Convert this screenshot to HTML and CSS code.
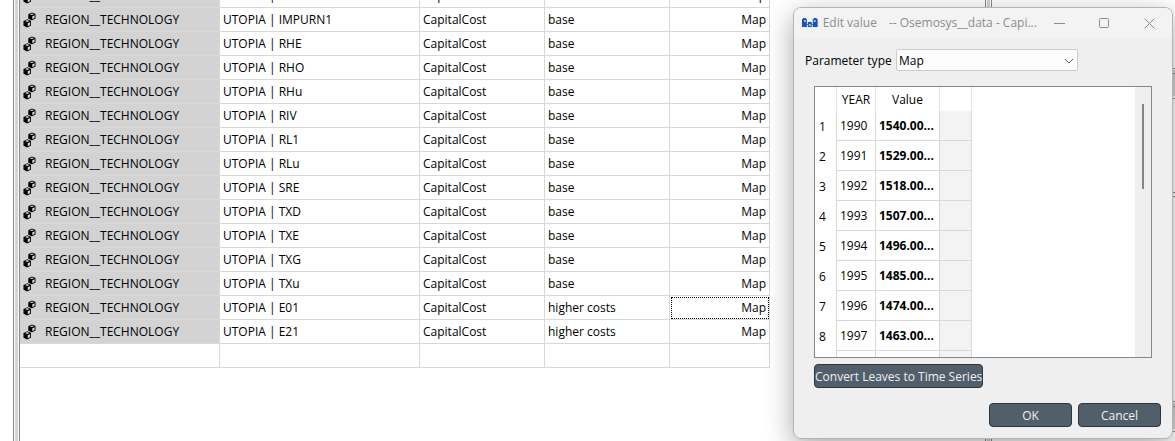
FILE: index.html
```html
<!DOCTYPE html>
<html lang="en">
<head>
<meta charset="utf-8">
<title>Edit value</title>
<link rel="stylesheet" href="styles.css">
</head>
<body>
<svg class="defs" aria-hidden="true">
  <symbol id="cubes" viewBox="0 0 13 16">
    <path d="M9 .5 12.500 2v4.500L9 8.300 5.300 6.800V2.200Z" fill="#000"/>
    <path d="M9.300 4.200 11.600 3.200v2.800L9.300 7.200ZM6.700 2.400 9 1.400l2 .8L9 3.100Z" fill="#d3d3d3"/>
    <path d="M4.300 7.200 8 8.800v4.700L4.300 15.500.5 13.800V9Z" fill="#000"/>
    <path d="M4.700 11.200 7.100 10v2.900L4.700 14.200ZM2 9 4.300 8.100l2 .9-2 .9Z" fill="#d3d3d3"/>
  </symbol>
</svg>
<div class="app">
  <div class="side"></div>
  <div class="splitter"></div>
  <main class="pane">
    <table class="grid">
      <colgroup><col class="c-class"><col class="c-entity"><col class="c-param"><col class="c-alt"><col class="c-value"></colgroup>
      <tbody id="rows"></tbody>
    </table>
  </main>
  <div class="splitter"></div>
  <aside class="docks">
    <div class="dock dock-top"></div>
    <div class="dock-title"></div>
    <div class="dock dock-mid"></div>
    <div class="dock dock-low"></div>
    <div class="dock-title"></div>
    <div class="dock dock-end"></div>
  </aside>
</div>

<section class="dialog" role="dialog" aria-label="Edit value">
  <header class="titlebar">
    <svg class="logo" viewBox="0 0 16 10" aria-hidden="true">
      <path d="M0 1h5v8H0ZM11 1h5v8h-5ZM6 4h4v5H6Z" fill="#1d4fc4"/>
      <path d="M5 6h1v1H5ZM10 6h1v1h-1ZM1 0h3v1H1ZM12 0h3v1h-3Z" fill="#1d4fc4"/>
      <path d="M2 2h2v2H2ZM12 2h2v2h-2ZM7 6h2v2H7Z" fill="#7be08a"/>
    </svg>
    <h1 class="title"><span>Edit value</span><span>-- Osemosys__data - Capi...</span></h1>
    <button class="win" aria-label="Minimize"><svg viewBox="0 0 11 11"><path d="M0 5.500h11"/></svg></button>
    <button class="win" aria-label="Maximize"><svg viewBox="0 0 11 11"><rect x=".5" y=".5" width="9" height="9" rx="1"/></svg></button>
    <button class="win" aria-label="Close"><svg viewBox="0 0 11 11"><path d="M.5.5l10 10M10.500.5l-10 10"/></svg></button>
  </header>
  <div class="body">
    <div class="field">
      <label for="ptype">Parameter type</label>
      <div class="select">
        <select id="ptype"><option>Map</option></select>
        <svg class="chevron" viewBox="0 0 10 6" aria-hidden="true"><path d="M1 1 5 5 9 1"/></svg>
      </div>
    </div>
    <div class="frame">
      <div class="view">
        <table class="map">
          <colgroup><col class="m-num"><col class="m-year"><col class="m-value"><col class="m-blank"></colgroup>
          <thead><tr><th></th><th>YEAR</th><th>Value</th><th></th></tr></thead>
          <tbody id="values"></tbody>
        </table>
      </div>
      <div class="scroll"><div class="thumb"></div></div>
    </div>
    <button class="btn convert">Convert Leaves to Time Series</button>
    <div class="actions"><button class="btn">OK</button><button class="btn">Cancel</button></div>
  </div>
</section>
<script src="app.js"></script>
</body>
</html>
```
FILE: styles.css
```css
* { box-sizing: border-box; }
html, body { height: 100%; }
body {
  margin: 0;
  overflow: hidden;
  background: #fff;
  color: #000;
  font: 12px/16px "Segoe UI", "Open Sans", "Noto Sans", sans-serif;
}
button, select { font: inherit; }
.defs { position: absolute; width: 0; height: 0; }

.app { display: flex; height: 100%; overflow: hidden; }
.side { width: 13px; }
.splitter {
  width: 7px;
  border: solid #828790;
  border-width: 0 1px;
  background: linear-gradient(90deg, #fff 1px, #d3d3d3 1px, #d3d3d3 4px, #fff 4px);
}
.pane { flex: 1; overflow: hidden; }
.docks { width: 183px; display: flex; flex-direction: column; background: #fff; }
.dock { border-bottom: 1px solid #828790; }
.dock-top { height: 69px; }
.dock-title { height: 30px; padding: 2px 0; border-bottom: 1px solid #828790; background: linear-gradient(#fff 1px, #d3d3d3 1px, #d3d3d3 4px, #828790 4px, #828790 5px, #d3d3d3 5px, #d3d3d3 27px, #fff 27px); }
.dock-mid { height: 94px; }
.dock-low { flex: 1; margin-top: 3px; border-top: 1px solid #828790; }
.dock-end { height: 9px; border: 0; }

.grid, .map { border-collapse: separate; border-spacing: 0; table-layout: fixed; }
.grid { width: 750px; margin-top: -16px; }
.c-class, .c-entity { width: 200px; }
.c-param, .c-alt { width: 125px; }
.c-value { width: 100px; }
.grid td {
  height: 24px;
  padding: 0 3px;
  border: solid #d8d8d8;
  border-width: 0 1px 1px 0;
  white-space: nowrap;
}
.grid .entity-class { background: #d3d3d3; }
.entity-class span { display: flex; align-items: center; gap: 9px; }
.entity-class svg { width: 13px; height: 16px; }
.grid .value { text-align: right; }
.grid .current { outline: 1px dotted #000; outline-offset: -2px; }

.dialog {
  position: absolute;
  left: 793px;
  top: 7px;
  width: 380px;
  border: 1px solid #b4b4b4;
  border-radius: 8px;
  background: #efefef;
  box-shadow: 0 8px 28px rgba(0, 0, 0, .34);
  overflow: hidden;
}
.titlebar { display: flex; align-items: center; height: 30px; padding-left: 8px; background: #f3f3f3; color: #8c8c8c; }
.logo { width: 16px; height: 10px; margin-right: 5px; }
.title { flex: 1; display: flex; gap: 12px; margin: 0; font-size: 12px; font-weight: 400; white-space: nowrap; }
.win { width: 46px; height: 28px; padding: 0; border: 0; background: none; }
.win svg { display: block; width: 11px; height: 11px; margin: auto; fill: none; stroke: #8c8c8c; }

.body { display: flex; flex-direction: column; padding: 11px; }
.field { display: flex; align-items: center; gap: 4px; }
.field label { width: 87px; padding-top: 2px; white-space: nowrap; }
.select { position: relative; width: 182px; }
.select select {
  display: block;
  appearance: none;
  width: 100%;
  height: 22px;
  padding: 2px 2px 0;
  border: 1px solid #ccc;
  border-radius: 2px;
  background: #fdfdfd;
  color: #000;
}
.chevron { position: absolute; right: 4px; top: 9px; width: 10px; height: 6px; fill: none; stroke: #606060; pointer-events: none; }

.frame { display: flex; height: 272px; margin: 15px 9px 0; border: 1px solid #828790; background: #fff; }
.view { flex: 1; overflow: hidden; }
.scroll { width: 16px; padding: 17px 7px 0; background: #efefef; }
.thumb { width: 2px; height: 85px; background: #868686; }
.map { width: 157px; }
.m-num { width: 22px; }
.m-year { width: 39px; }
.m-value { width: 64px; }
.m-blank { width: 32px; }
.map th { padding: 2px 0 0; height: 24px; font-weight: 400; border-right: 1px solid #e5e5e5; }
.map tbody th { height: 30px; border-right-color: #d8d8d8; }
.map td { padding: 0 3px; border: solid #d8d8d8; border-width: 0 1px 1px 0; white-space: nowrap; }
.map .num { padding: 2px 0 0 4px; text-align: left; }
.map .amount { font-weight: 700; }
.map .blank { background: #f3f3f3; }

.btn { height: 24px; padding: 2px 0 0; border: 1px solid #2b363e; border-radius: 4px; background: #505f69; color: #f0f0f0; white-space: nowrap; }
.convert { align-self: flex-start; margin: 6px 0 0 9px; }
.actions { display: flex; justify-content: flex-end; gap: 6px; margin-top: 15px; }
.actions .btn { width: 83px; }
```
FILE: app.js
```js
const entities = ["IMPOIL1", "IMPURN1", "RHE", "RHO", "RHu", "RIV", "RL1", "RLu", "SRE", "TXD", "TXE", "TXG", "TXu", "E01", "E21"];
const alternative = name => name.startsWith("E") ? "higher costs" : "base";

document.getElementById("rows").innerHTML = entities.map(name => `
  <tr>
    <td class="entity-class"><span><svg aria-hidden="true"><use href="#cubes"/></svg>REGION__TECHNOLOGY</span></td>
    <td>UTOPIA | ${name}</td>
    <td>CapitalCost</td>
    <td>${alternative(name)}</td>
    <td class="value${name === "E01" ? " current" : ""}">Map</td>
  </tr>`).join("") + "<tr><td></td><td></td><td></td><td></td><td></td></tr>";

document.getElementById("values").innerHTML = Array.from({ length: 8 }, (_, i) => `
  <tr>
    <th class="num">${i + 1}</th>
    <td>${1990 + i}</td>
    <td class="amount">${1540 - 11 * i}.00...</td>
    <td class="blank"></td>
  </tr>`).join("") + '<tr><th></th><td></td><td></td><td class="blank"></td></tr>';
```
